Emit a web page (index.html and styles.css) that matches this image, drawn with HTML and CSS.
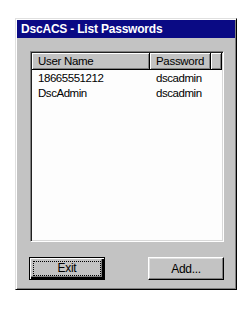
FILE: index.html
```html
<!DOCTYPE html>
<html>
<head>
<meta charset="utf-8">
<link rel="stylesheet" href="styles.css">
</head>
<body>
<div class="window">
  <div class="titlebar">DscACS - List Passwords</div>
  <div class="content">
    <div class="listview">
      <div class="header">
        <div class="hcell col-user">User Name</div>
        <div class="hcell col-pass">Password</div>
        <div class="hcell col-rest"></div>
      </div>
      <div class="row"><span class="col-user cell">18665551212</span><span class="col-pass cell">dscadmin</span></div>
      <div class="row"><span class="col-user cell">DscAdmin</span><span class="col-pass cell">dscadmin</span></div>
    </div>
    <div class="buttons">
      <button class="btn default"><span class="focus">Exit</span></button>
      <button class="btn">Add...</button>
    </div>
  </div>
</div>
</body>
</html>
```
FILE: styles.css
```css
html, body {
  margin: 0;
  padding: 0;
  background: #ffffff;
}
body {
  width: 252px;
  height: 312px;
  overflow: hidden;
  font-family: "Liberation Sans", Arial, sans-serif;
  font-size: 11px;
  color: #000;
}
.window {
  margin: 18px 0 0 15px;
  width: 222px;
  height: 272px;
  box-sizing: border-box;
  background: #c3c3c3;
  border-style: solid;
  border-width: 1px;
  border-color: #e0e0e0 #000 #000 #e0e0e0;
  box-shadow: inset 1px 1px #ffffff, inset -1px -1px #808080;
  padding: 1px;
  display: flex;
  flex-direction: column;
}
.titlebar {
  height: 18px;
  background: #0a0a84;
  color: #fff;
  font-weight: bold;
  font-size: 12px;
  letter-spacing: -0.2px;
  line-height: 18px;
  padding-left: 4px;
}
.content {
  padding: 13px 11px 0 13px;
  display: flex;
  flex-direction: column;
}
.listview {
  height: 191px;
  box-sizing: border-box;
  background: #fdfdfd;
  border-style: solid;
  border-width: 1px;
  border-color: #808080 #ffffff #ffffff #808080;
  box-shadow: inset 1px 1px #202020, inset -1px -1px #d8d8d8;
  padding: 1px;
}
.header {
  display: flex;
  height: 17px;
  margin-bottom: 1px;
}
.hcell {
  box-sizing: border-box;
  height: 17px;
  background: #c3c3c3;
  border-right: 1px solid #000;
  border-bottom: 1px solid #000;
  box-shadow: inset 1px 1px #ffffff, inset -1px -1px #808080;
  line-height: 17px;
  padding-left: 6px;
  font-size: 11.5px;
  letter-spacing: -0.3px;
}
.col-user { width: 118px; }
.col-pass { width: 61px; }
.col-rest { width: 11px; }
.row {
  display: flex;
  height: 15px;
  line-height: 15px;
  font-size: 11.5px;
  letter-spacing: -0.45px;
}
.cell {
  box-sizing: border-box;
  padding-left: 6px;
  display: block;
}
.buttons {
  margin-top: 15px;
  margin-left: -1px;
  display: flex;
  justify-content: space-between;
}
.btn {
  width: 76px;
  height: 23px;
  box-sizing: border-box;
  margin: 0;
  padding: 0;
  background: #c3c3c3;
  font-family: "Liberation Sans", Arial, sans-serif;
  font-size: 12px;
  letter-spacing: -0.3px;
  color: #000;
  border-style: solid;
  border-width: 1px;
  border-color: #ffffff #000 #000 #ffffff;
  box-shadow: inset -1px -1px #808080, inset 1px 1px #dfdfdf;
}
.btn.default {
  border: 1px solid #000;
  box-shadow: inset 1px 1px #ffffff, inset -2px -2px #000, inset -3px -3px #808080;
  padding: 3px;
}
.focus {
  display: block;
  height: 100%;
  box-sizing: border-box;
  border: 1px dotted #000;
  line-height: 13px;
}
```
